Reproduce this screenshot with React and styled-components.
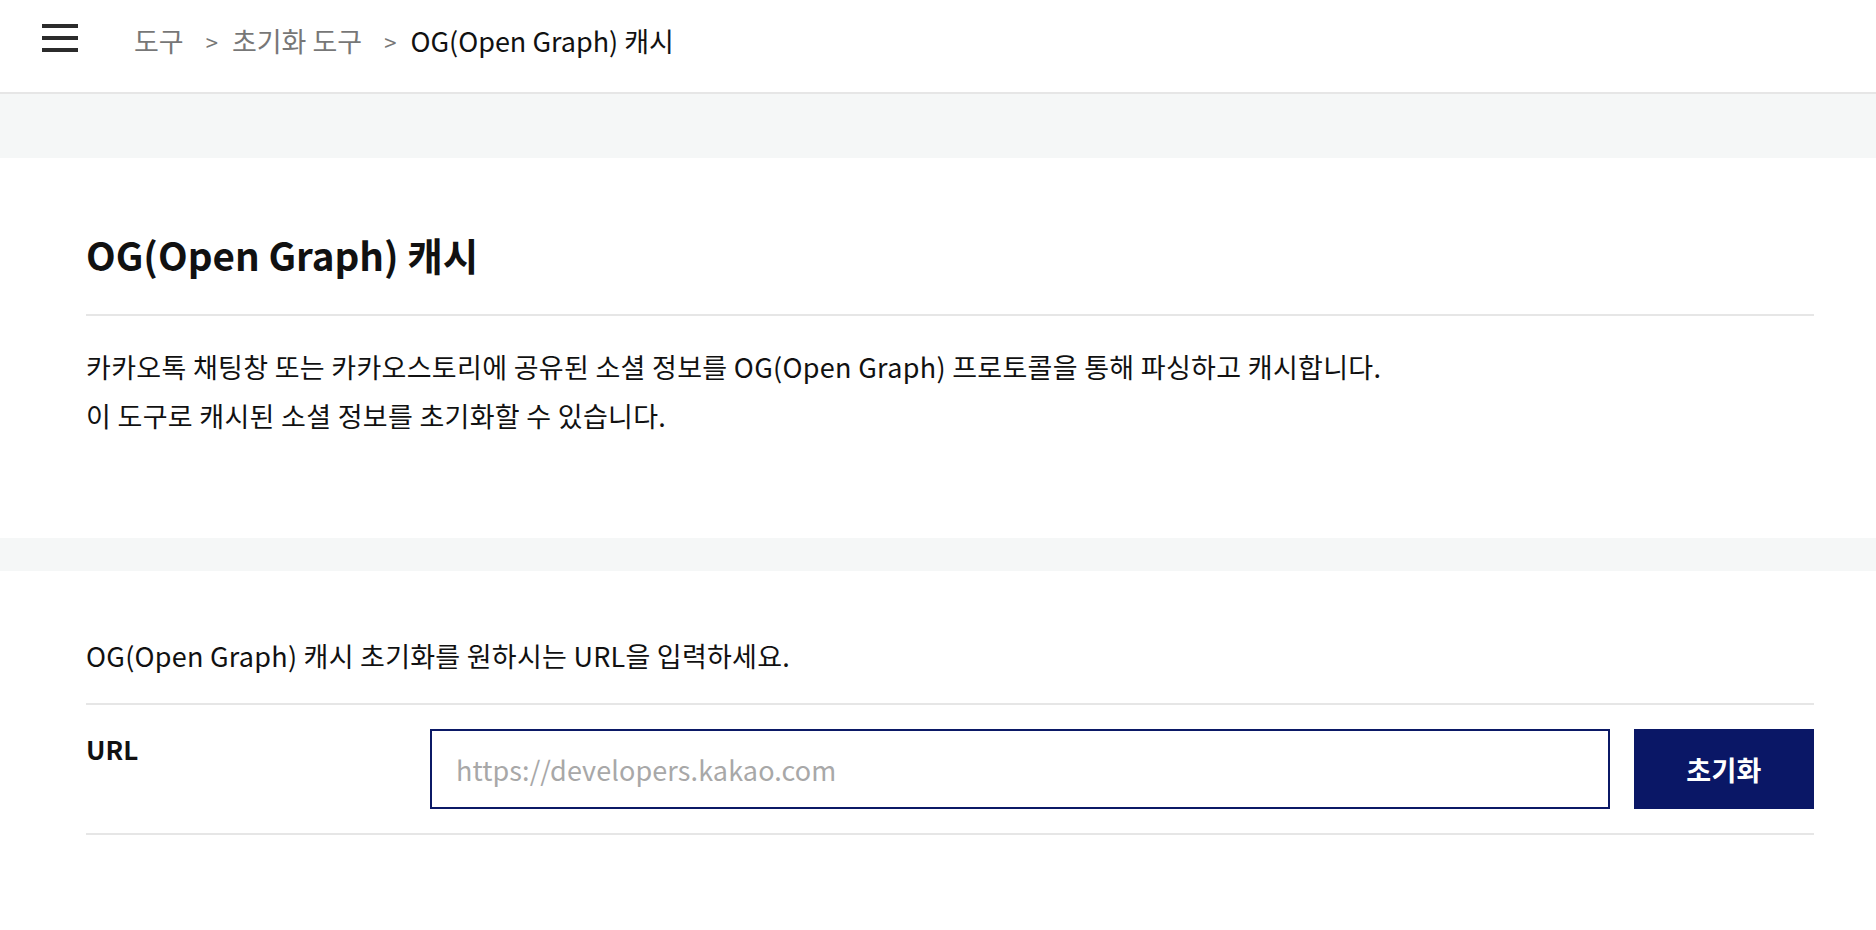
import React from "react";
import styled, { createGlobalStyle } from "styled-components";

const Global = createGlobalStyle`
  html, body { margin: 0; padding: 0; background: #fff; }
  body {
    font-family: "Noto Sans CJK KR", "Noto Sans", sans-serif;
    color: #111;
    -webkit-font-smoothing: antialiased;
  }
  * { box-sizing: border-box; }
`;

const Header = styled.header`
  height: 94px;
  border-bottom: 2px solid #e6e6e6;
  display: flex;
  align-items: flex-start;
  padding-left: 42px;
  background: #fff;
`;

const MenuButton = styled.button`
  margin-top: 24px;
  width: 36px;
  height: 28px;
  padding: 0;
  border: 0;
  background: transparent;
  display: flex;
  flex-direction: column;
  justify-content: space-between;
  cursor: pointer;
`;

const MenuLine = styled.span`
  display: block;
  width: 36px;
  height: 4px;
  background: #2b2b2b;
`;

const Crumbs = styled.nav`
  margin-left: 56px;
  margin-top: 21px;
  display: flex;
  align-items: center;
  font-size: 27px;
  letter-spacing: 0;
  line-height: normal;
  white-space: nowrap;
`;

const Crumb = styled.span`
  color: ${(p) => (p.$current ? "#111" : "#777")};
`;

const Sep = styled.span`
  color: #777;
  font-size: 22px;
  margin: 0 14px 0 22px;
`;

const Band = styled.div`
  height: ${(p) => p.$h}px;
  background: #f5f7f7;
`;

const Section = styled.section`
  background: #fff;
  padding: ${(p) => p.$pad};
  padding-left: 86px;
  padding-right: 62px;
`;

const Title = styled.h1`
  margin: 0;
  font-size: 38.6px;
  line-height: 60px;
  font-weight: 700;
  color: #111;
`;

const Divider = styled.hr`
  margin: ${(p) => p.$m || "0"};
  border: 0;
  height: 2px;
  background: #e6e6e6;
`;

const Desc = styled.p`
  margin: 26px 0 0;
  font-size: 27px;
  letter-spacing: 0.3px;
  line-height: 49px;
  color: #111;
`;

const Prompt = styled.p`
  margin: 0;
  font-size: 27px;
  letter-spacing: 0.25px;
  line-height: 39px;
  color: #111;
`;

const FormRow = styled.div`
  display: grid;
  grid-template-columns: 320px 1fr 180px;
  column-gap: 24px;
  align-items: start;
  padding: 24px 0 24px;
`;

const Label = styled.label`
  font-size: 26px;
  font-weight: 700;
  line-height: 39px;
  color: #111;
`;

const Input = styled.input`
  height: 80px;
  width: 100%;
  border: 2px solid #0b1966;
  padding: 0 24px;
  font-family: inherit;
  font-size: 27px;
  letter-spacing: 0.1px;
  color: #111;
  outline: none;
  &::placeholder { color: #a8a8a8; }
`;

const Button = styled.button`
  height: 80px;
  border: 0;
  background: #0a1766;
  color: #fff;
  font-family: inherit;
  font-size: 27px;
  letter-spacing: 0.3px;
  font-weight: 700;
  cursor: pointer;
`;

export default function App() {
  return (
    <>
      <Global />
      <Header>
        <MenuButton aria-label="메뉴">
          <MenuLine />
          <MenuLine />
          <MenuLine />
        </MenuButton>
        <Crumbs>
          <Crumb>도구</Crumb>
          <Sep>&gt;</Sep>
          <Crumb>초기화 도구</Crumb>
          <Sep>&gt;</Sep>
          <Crumb $current>OG(Open Graph) 캐시</Crumb>
        </Crumbs>
      </Header>
      <Band $h={64} />
      <Section $pad="66px 0 98px">
        <Title>OG(Open Graph) 캐시</Title>
        <Divider $m="30px 0 0" />
        <Desc>
          카카오톡 채팅창 또는 카카오스토리에 공유된 소셜 정보를 OG(Open Graph) 프로토콜을 통해 파싱하고 캐시합니다.
          <br />
          이 도구로 캐시된 소셜 정보를 초기화할 수 있습니다.
        </Desc>
      </Section>
      <Band $h={33} />
      <Section $pad="65px 0 94px">
        <Prompt>OG(Open Graph) 캐시 초기화를 원하시는 URL을 입력하세요.</Prompt>
        <Divider $m="28px 0 0" />
        <FormRow>
          <Label htmlFor="url">URL</Label>
          <Input id="url" placeholder="https://developers.kakao.com" />
          <Button>초기화</Button>
        </FormRow>
        <Divider />
      </Section>
    </>
  );
}
